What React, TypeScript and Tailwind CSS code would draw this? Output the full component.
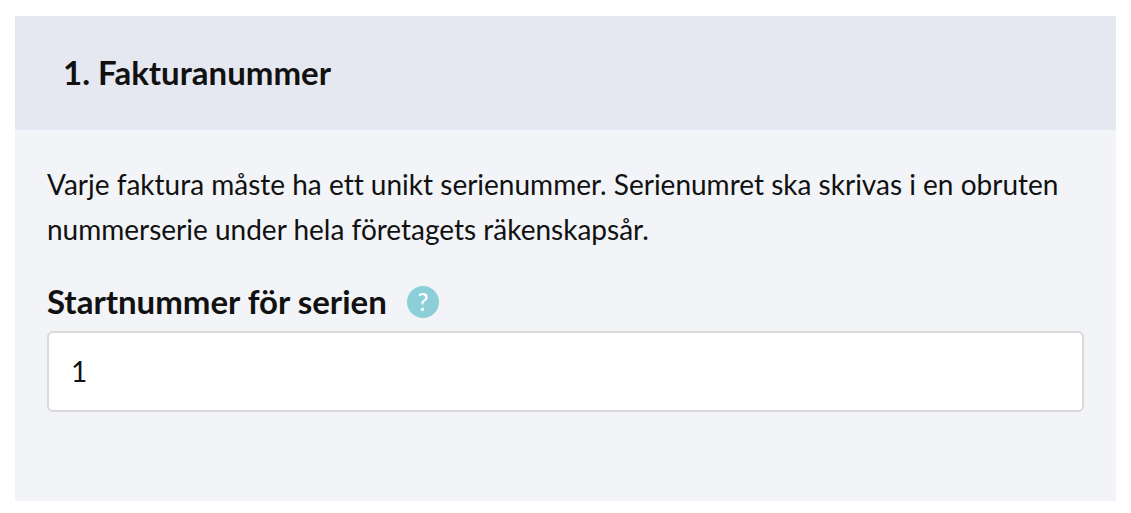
import { useState } from "react";

export default function App() {
  const [startNumber, setStartNumber] = useState("1");

  return (
    <main className="bg-white px-[15px] pt-4 pb-3 font-['Lato',sans-serif] text-[#111111] [font-variant-ligatures:none]">
      <section className="bg-[#f2f4f8] pb-[89px]">
        <header className="bg-[#e5e8f0] px-12 pt-8 pb-[34px]">
          <h2 className="text-[33px] leading-[48px] font-bold">1. Fakturanummer</h2>
        </header>

        <div className="px-8 pt-8">
          <p className="text-[28px] leading-[45px]">
            Varje faktura måste ha ett unikt serienummer. Serienumret ska skrivas i en obruten
            nummerserie under hela företagets räkenskapsår.
          </p>

          <div className="mt-6 flex items-center gap-5">
            <label htmlFor="start-number" className="text-[33px] leading-[51px] font-bold">
              Startnummer för serien
            </label>
            <button
              type="button"
              aria-label="Hjälp"
              className="flex size-8 items-center justify-center rounded-full bg-[#8ccfd8] text-[24px] leading-none font-medium text-white"
            >
              ?
            </button>
          </div>

          <input
            id="start-number"
            type="text"
            inputMode="numeric"
            value={startNumber}
            onChange={(e) => setStartNumber(e.target.value)}
            className="mt-1 block h-[81px] w-full rounded-md border-2 border-[#d9d9d9] bg-white px-[22px] pb-0.5 text-[28px] outline-none focus:border-[#8ccfd8]"
          />
        </div>
      </section>
    </main>
  );
}
